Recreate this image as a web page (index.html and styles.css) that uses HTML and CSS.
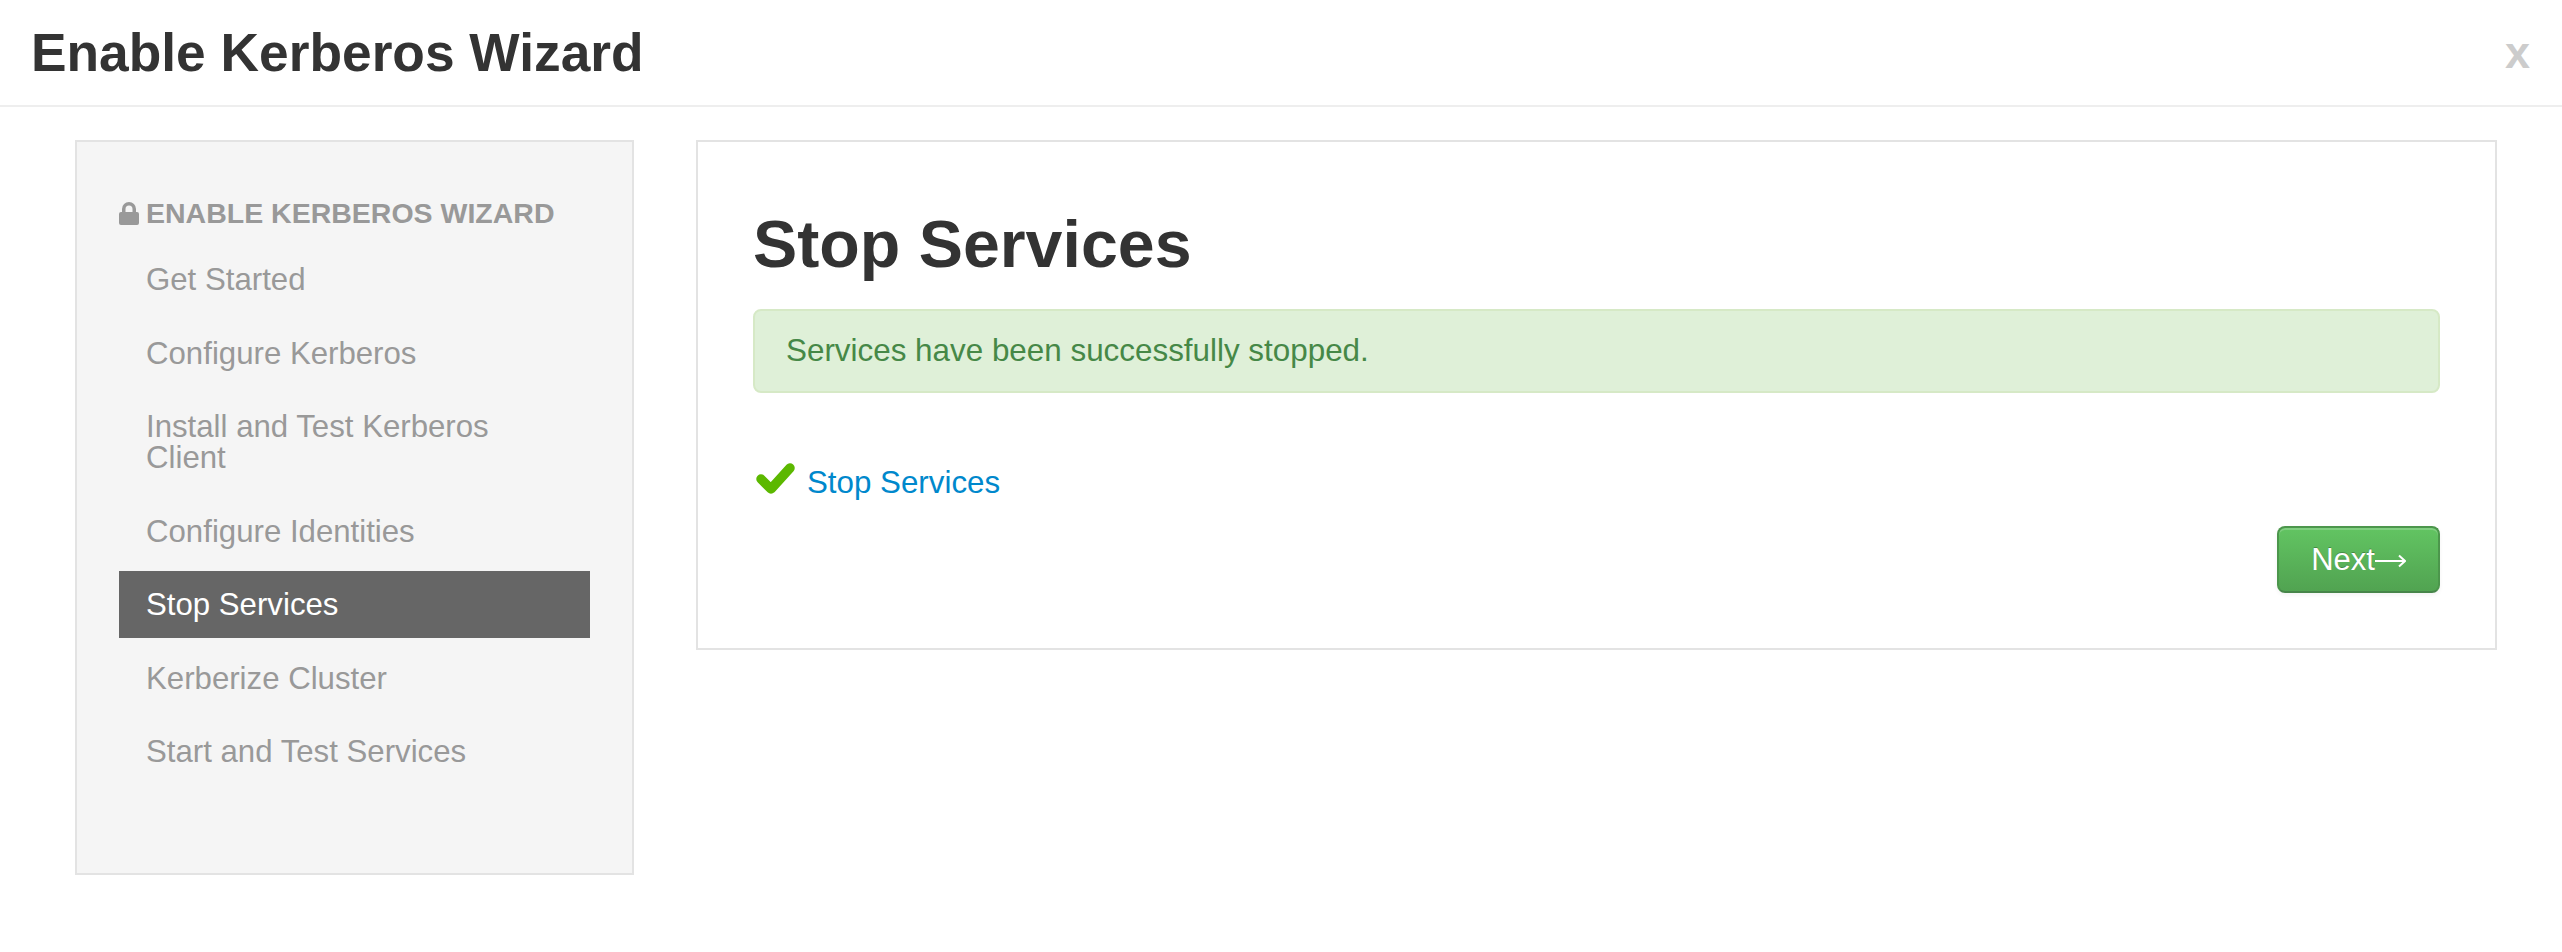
FILE: index.html
```html
<!DOCTYPE html>
<html>
<head>
    <title>Enable Kerberos Wizard</title>
    <link rel="stylesheet" href="styles.css">
</head>
<body>
    <div class="modal-header">
        <h1>Enable Kerberos Wizard</h1>
        <span class="close">x</span>
    </div>

    <div class="wizard">
        <div class="sidebar">
            <div class="nav-header">
                <svg class="lock" viewBox="0 0 20 23"><path fill-rule="evenodd" d="M3 10V7a7 7 0 0 1 14 0v3h1a2 2 0 0 1 2 2v9a2 2 0 0 1-2 2H2a2 2 0 0 1-2-2v-9a2 2 0 0 1 2-2zM6.500 10h7V7a3.500 3.500 0 0 0-7 0z"/></svg>
                ENABLE KERBEROS WIZARD
            </div>
            <ul class="nav">
                <li>Get Started</li>
                <li>Configure Kerberos</li>
                <li>Install and Test Kerberos<br>Client</li>
                <li>Configure Identities</li>
                <li class="active">Stop Services</li>
                <li>Kerberize Cluster</li>
                <li>Start and Test Services</li>
            </ul>
        </div>

        <div class="content">
            <h2>Stop Services</h2>
            <div class="alert">Services have been successfully stopped.</div>
            <div class="task">
                <svg class="check" viewBox="0 0 39 31"><path d="M5 16l10 10L34 5"/></svg>
                <a href="#">Stop Services</a>
            </div>
            <div class="actions">
                <button>Next<svg class="arrow" viewBox="0 0 31 14"><path d="M0 7h29.500M24 1.500L30 7 24 12.500"/></svg></button>
            </div>
        </div>
    </div>
</body>
</html>
```

FILE: styles.css
```css
body {
    margin: 0;
    font-family: "Liberation Sans", Arial, sans-serif;
    background: white;
    color: #333;
}
.modal-header {
    display: flex;
    justify-content: space-between;
    align-items: center;
    height: 105px;
    padding: 0 32px 0 31px;
    border-bottom: 2px solid #eee;
}
h1 {
    margin: 0;
    font-size: 53.3px;
    font-weight: bold;
}
.close {
    font-size: 45px;
    font-weight: bold;
    color: #ccc;
}
.wizard {
    display: flex;
    align-items: flex-start;
    gap: 62px;
    padding: 33px 65px 0 75px;
}
.sidebar {
    box-sizing: border-box;
    width: 559px;
    height: 735px;
    flex-shrink: 0;
    padding: 55px 42px 0;
    background: #f5f5f5;
    border: 2px solid #e3e3e3;
}
.nav-header {
    display: flex;
    align-items: center;
    gap: 7px;
    font-size: 28.500px;
    font-weight: bold;
    color: #999;
    height: 32px;
}
.lock {
    width: 20px;
    height: 23px;
    fill: #999;
}
.nav {
    list-style: none;
    margin: 17px 0 0;
    padding: 0;
}
.nav li {
    padding: 18px 27px;
    margin-bottom: 6.500px;
    font-size: 31.200px;
    line-height: 31px;
    color: #999;
}
.nav li.active {
    background: #666;
    color: white;
}
.content {
    flex: 1;
    box-sizing: border-box;
    height: 510px;
    padding: 62px 55px 0 55px;
    border: 2px solid #e3e3e3;
}
h2 {
    margin: 0;
    font-size: 66.300px;
    line-height: 80px;
    font-weight: bold;
}
.alert {
    box-sizing: border-box;
    height: 84px;
    margin-top: 25px;
    padding: 0 31px;
    display: flex;
    align-items: center;
    font-size: 31.400px;
    color: #468847;
    background: #dff0d8;
    border: 2px solid #d6e9c6;
    border-radius: 8px;
}
.task {
    display: flex;
    align-items: center;
    gap: 12px;
    margin-top: 72px;
    font-size: 31.300px;
}
.check {
    width: 39px;
    height: 31px;
    margin: -9px 0 0 3px;
    fill: none;
    stroke: #5cb800;
    stroke-width: 9.500;
    stroke-linecap: round;
    stroke-linejoin: round;
}
.task a {
    color: #0088cc;
    text-decoration: none;
}
.actions {
    display: flex;
    justify-content: flex-end;
    margin-top: 25px;
}
button {
    display: flex;
    align-items: center;
    justify-content: center;
    box-sizing: border-box;
    width: 163px;
    height: 67px;
    padding: 0;
    font-family: inherit;
    font-size: 31px;
    color: white;
    text-shadow: 0 -1px 0 rgba(0,0,0,0.25);
    background: linear-gradient(#62c462, #51a351);
    border: 2px solid #4c964c;
    border-bottom-color: #47854a;
    border-radius: 8px;
    box-shadow: inset 0 2px 0 rgba(255,255,255,0.2), 0 2px 4px rgba(0,0,0,0.05);
}
.arrow {
    width: 31px;
    height: 14px;
    margin-top: 3px;
    fill: none;
    stroke: white;
    stroke-width: 2;
}
```
